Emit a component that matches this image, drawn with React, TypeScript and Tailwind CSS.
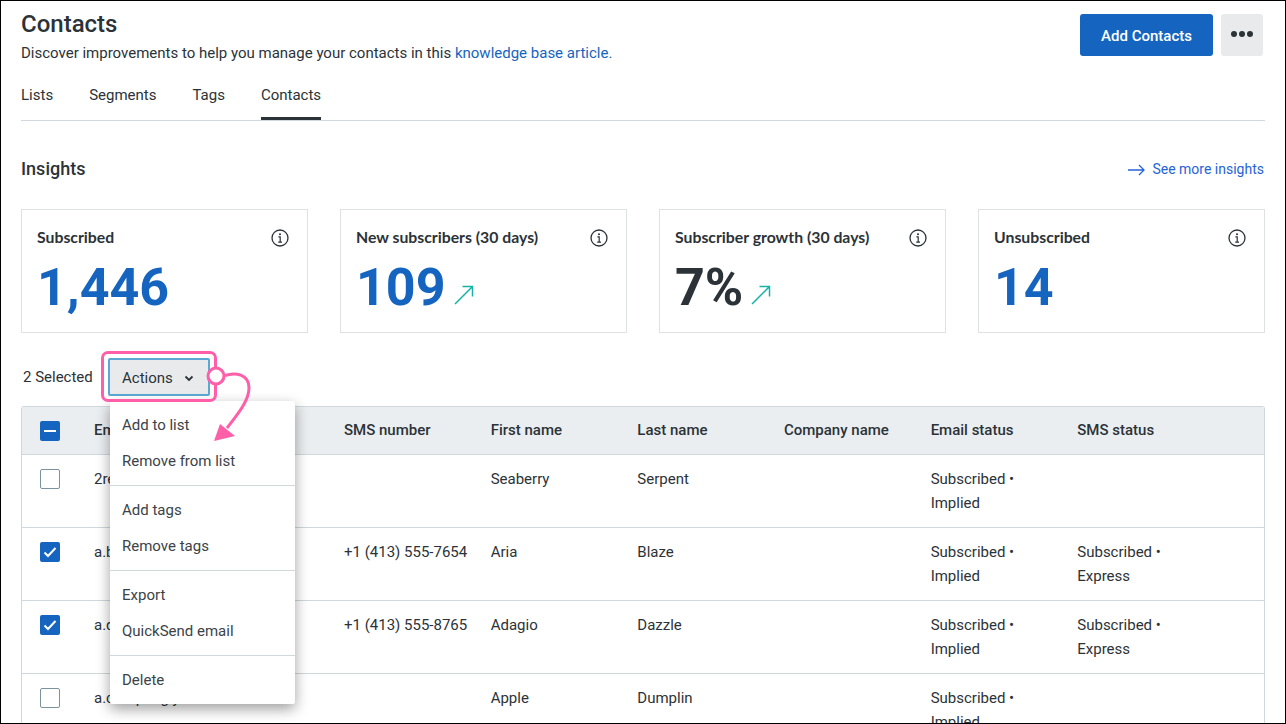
import React from 'react'

type Row = {
  email: string
  sms: string
  first: string
  last: string
  emailStatus: string
  smsStatus?: string
  checked?: boolean
}

const rows: Row[] = [
  { email: '2reeds@example.com', sms: '', first: 'Seaberry', last: 'Serpent', emailStatus: 'Implied' },
  { email: 'a.blaze@example.com', sms: '+1 (413) 555-7654', first: 'Aria', last: 'Blaze', emailStatus: 'Implied', smsStatus: 'Express', checked: true },
  { email: 'a.dazzle@example.com', sms: '+1 (413) 555-8765', first: 'Adagio', last: 'Dazzle', emailStatus: 'Implied', smsStatus: 'Express', checked: true },
  { email: 'a.compangly.net', sms: '', first: 'Apple', last: 'Dumplin', emailStatus: 'Implied' },
]

const cards = [
  { title: 'Subscribed', value: '1,446' },
  { title: 'New subscribers (30 days)', value: '109', trend: true },
  { title: 'Subscriber growth (30 days)', value: '7%', trend: true, dark: true },
  { title: 'Unsubscribed', value: '14' },
]

const menuGroups = [
  ['Add to list', 'Remove from list'],
  ['Add tags', 'Remove tags'],
  ['Export', 'QuickSend email'],
  ['Delete'],
]

const rowGrid = 'grid grid-cols-[72px_250px_repeat(5,146.67px)_1fr]'

const InfoIcon = () => (
  <svg width="18" height="18" viewBox="0 0 18 18" fill="none" stroke="#2b3338" className="shrink-0">
    <circle cx="9" cy="9" r="8" strokeWidth="1.3" />
    <circle cx="9" cy="5.2" r="1" fill="#2b3338" stroke="none" />
    <path d="M7.4 7.8H9.2V13M7.2 13.2H11" strokeWidth="1.2" />
  </svg>
)

const TrendIcon = () => (
  <svg width="20" height="20" viewBox="0 0 20 20" fill="none" stroke="#14b3a8" strokeWidth="1.5" className="mb-[13px] ml-[8px]">
    <path d="M1 19L18.5 1.5M8.5 1.5H18.5V11.5" />
  </svg>
)

const Checkbox = ({ checked, partial }: { checked?: boolean; partial?: boolean }) => {
  if (partial) {
    return (
      <span className="flex h-5 w-5 items-center justify-center rounded-[2px] bg-[#1565c0]">
        <span className="h-[2px] w-[12px] bg-white" />
      </span>
    )
  }
  if (checked) {
    return (
      <span className="flex h-5 w-5 items-center justify-center rounded-[2px] bg-[#1565c0]">
        <svg width="14" height="12" viewBox="0 0 14 12" fill="none" stroke="white" strokeWidth="2">
          <path d="M1.5 6.5L5 10L12.5 2" />
        </svg>
      </span>
    )
  }
  return <span className="block h-5 w-5 rounded-[2px] border border-[#7b929f] bg-white" />
}

const ActionsMenu = () => (
  <div className="absolute left-[2px] top-[43px] z-10 w-[185px] rounded-[2px] bg-white shadow-[0_5px_14px_rgba(0,0,0,0.38)]">
    {menuGroups.map((group, i) => (
      <div key={i} className={i > 0 ? 'border-t border-[#cfd8dc] py-[6px]' : 'py-[6px]'}>
        {group.map((item) => (
          <div key={item} className="flex h-9 items-center pl-3 text-[15px] text-[#3b4348]">
            {item}
          </div>
        ))}
      </div>
    ))}
  </div>
)

const Callout = () => (
  <svg width="60" height="80" viewBox="0 0 60 80" fill="none" className="absolute left-[97px] top-[7px] z-20">
    <path d="M20 10.5C30 7 44 9 44 23C44 36 32 50 22 63" stroke="#ff5fa8" strokeWidth="3" />
    <path d="M9 76L15 59L30 71Z" fill="#ff5fa8" />
    <circle cx="11" cy="11" r="8" fill="white" stroke="#ff5fa8" strokeWidth="3" />
  </svg>
)

export default function App() {
  return (
    <div className="relative box-border h-[724px] w-[1286px] overflow-hidden border border-black bg-white px-5 pt-2 font-['Roboto',sans-serif] text-[#2b3338]">
      <div className="flex items-start justify-between">
        <div>
          <h1 className="text-2xl leading-[30px] font-medium">Contacts</h1>
          <p className="mt-[3px] text-[15px] leading-[22px]">
            Discover improvements to help you manage your contacts in this{' '}
            <a className="text-[#1565c0]">knowledge base article.</a>
          </p>
        </div>
        <div className="flex gap-2 pt-[5px] pr-[2px]">
          <button className="h-[42px] w-[133px] rounded-[3px] bg-[#1565c0] pt-[2px] text-[15px] font-medium text-white">
            Add Contacts
          </button>
          <button className="flex h-[42px] w-[42px] items-center justify-center gap-[2px] rounded-[3px] bg-[#e8eaec] pb-[2px]">
            <span className="h-[6px] w-[6px] rounded-full bg-[#2b3338]" />
            <span className="h-[6px] w-[6px] rounded-full bg-[#2b3338]" />
            <span className="h-[6px] w-[6px] rounded-full bg-[#2b3338]" />
          </button>
        </div>
      </div>

      <nav className="mt-5 flex gap-9 border-b border-[#cfd8dc] text-[15px] leading-[22px]">
        <span className="pb-[14px]">Lists</span>
        <span className="pb-[14px]">Segments</span>
        <span className="pb-[14px]">Tags</span>
        <span className="border-b-[3px] border-[#2b3338] pb-[11px]">Contacts</span>
      </nav>

      <div className="mt-9 flex items-center justify-between">
        <h2 className="text-lg leading-6 font-medium">Insights</h2>
        <a className="mt-[1px] flex items-center gap-[7px] pr-px text-[14px] text-[#2563d9]">
          <svg width="17" height="12" viewBox="0 0 17 12" fill="none" stroke="#2563d9" strokeWidth="1.3">
            <path d="M0 6H16M11 1L16 6L11 11" />
          </svg>
          See more insights
        </a>
      </div>

      <div className="mt-7 grid grid-cols-4 gap-8">
        {cards.map((card) => (
          <div key={card.title} className="h-[124px] border border-[#dfe1e3] pt-[18px] pr-[18px] pl-[15px]">
            <div className="flex h-[20px] items-center justify-between font-['Lato',sans-serif] text-[15.8px] leading-[18px] font-bold">
              <span className="-translate-y-px">{card.title}</span>
              <InfoIcon />
            </div>
            <div className="mt-[10px] flex items-end">
              <span className={card.dark ? 'text-[52px] leading-[60px] font-bold text-[#2b3338]' : 'text-[52px] leading-[60px] font-bold text-[#1565c0]'}>
                {card.value}
              </span>
              {card.trend && <TrendIcon />}
            </div>
          </div>
        ))}
      </div>

      <div className="mt-[25px] flex items-center pl-[2px]">
        <span className="w-[85px] text-[15px]">2 Selected</span>
        <div className="relative">
          <div className="pointer-events-none absolute -top-[7px] -right-[7px] -bottom-[6px] -left-[7px] z-20 rounded-[7px] border-[3px] border-[#ff5fa8]" />
          <button className="flex h-[38px] w-[102px] items-center gap-[11px] rounded-[2px] border-2 border-[#5ba8d6] bg-[#e8eaec] pt-[3px] pl-3 text-[15px]">
            Actions
            <svg width="10" height="7" viewBox="0 0 10 7" fill="none" stroke="#2b3338" strokeWidth="1.8">
              <path d="M1.5 1.5L5 5L8.5 1.5" />
            </svg>
          </button>
          <ActionsMenu />
          <Callout />
        </div>
      </div>

      <div className="mt-[10px] rounded-t-[3px] border-x border-t border-[#cfd8dc] text-[15px]">
        <div className={`${rowGrid} h-[48px] items-center border-b border-[#cfd8dc] bg-[#ebeef1] font-medium`}>
          <span className="pl-[18px]">
            <Checkbox partial />
          </span>
          <span>Email</span>
          <span>SMS number</span>
          <span>First name</span>
          <span>Last name</span>
          <span>Company name</span>
          <span>Email status</span>
          <span>SMS status</span>
        </div>
        {rows.map((row) => (
          <div key={row.email} className={`${rowGrid} h-[73px] border-b border-[#cfd8dc] pt-3 leading-6`}>
            <span className="pt-[2px] pl-[18px]">
              <Checkbox checked={row.checked} />
            </span>
            <span>{row.email}</span>
            <span>{row.sms}</span>
            <span>{row.first}</span>
            <span>{row.last}</span>
            <span />
            <span>
              Subscribed •<br />
              {row.emailStatus}
            </span>
            <span>
              {row.smsStatus && (
                <>
                  Subscribed •<br />
                  {row.smsStatus}
                </>
              )}
            </span>
          </div>
        ))}
      </div>
    </div>
  )
}
